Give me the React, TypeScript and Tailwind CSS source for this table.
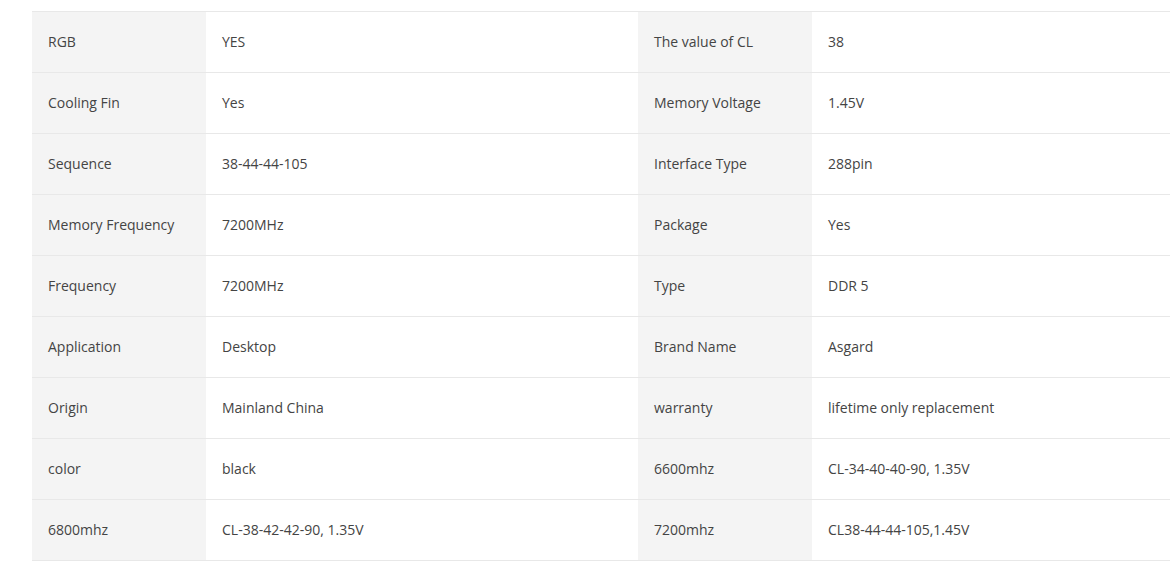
const rows: [string, string, string, string][] = [
  ["RGB", "YES", "The value of CL", "38"],
  ["Cooling Fin", "Yes", "Memory Voltage", "1.45V"],
  ["Sequence", "38-44-44-105", "Interface Type", "288pin"],
  ["Memory Frequency", "7200MHz", "Package", "Yes"],
  ["Frequency", "7200MHz", "Type", "DDR 5"],
  ["Application", "Desktop", "Brand Name", "Asgard"],
  ["Origin", "Mainland China", "warranty", "lifetime only replacement"],
  ["color", "black", "6600mhz", "CL-34-40-40-90, 1.35V"],
  ["6800mhz", "CL-38-42-42-90, 1.35V", "7200mhz", "CL38-44-44-105,1.45V"],
]

export default function App() {
  return (
    <div className="w-[1170px] h-[567px] overflow-hidden bg-white pt-[11px] pl-[32px]" style={{ fontFamily: '"Open Sans", sans-serif' }}>
      <div className="w-[1138px] border-t border-[#e8e8e8]">
        {rows.map((r, i) => (
          <div key={i} className="grid grid-cols-[174px_432px_174px_1fr] h-[61px] border-b border-[#e8e8e8] text-[14px] text-[#444]">
            <div className="bg-[#f4f4f4] flex items-center pl-[16px] pb-[2px]">{r[0]}</div>
            <div className="flex items-center pl-[16px] pb-[2px]">{r[1]}</div>
            <div className="bg-[#f4f4f4] flex items-center pl-[16px] pb-[2px]">{r[2]}</div>
            <div className="flex items-center pl-[16px] pb-[2px]">{r[3]}</div>
          </div>
        ))}
      </div>
    </div>
  )
}
